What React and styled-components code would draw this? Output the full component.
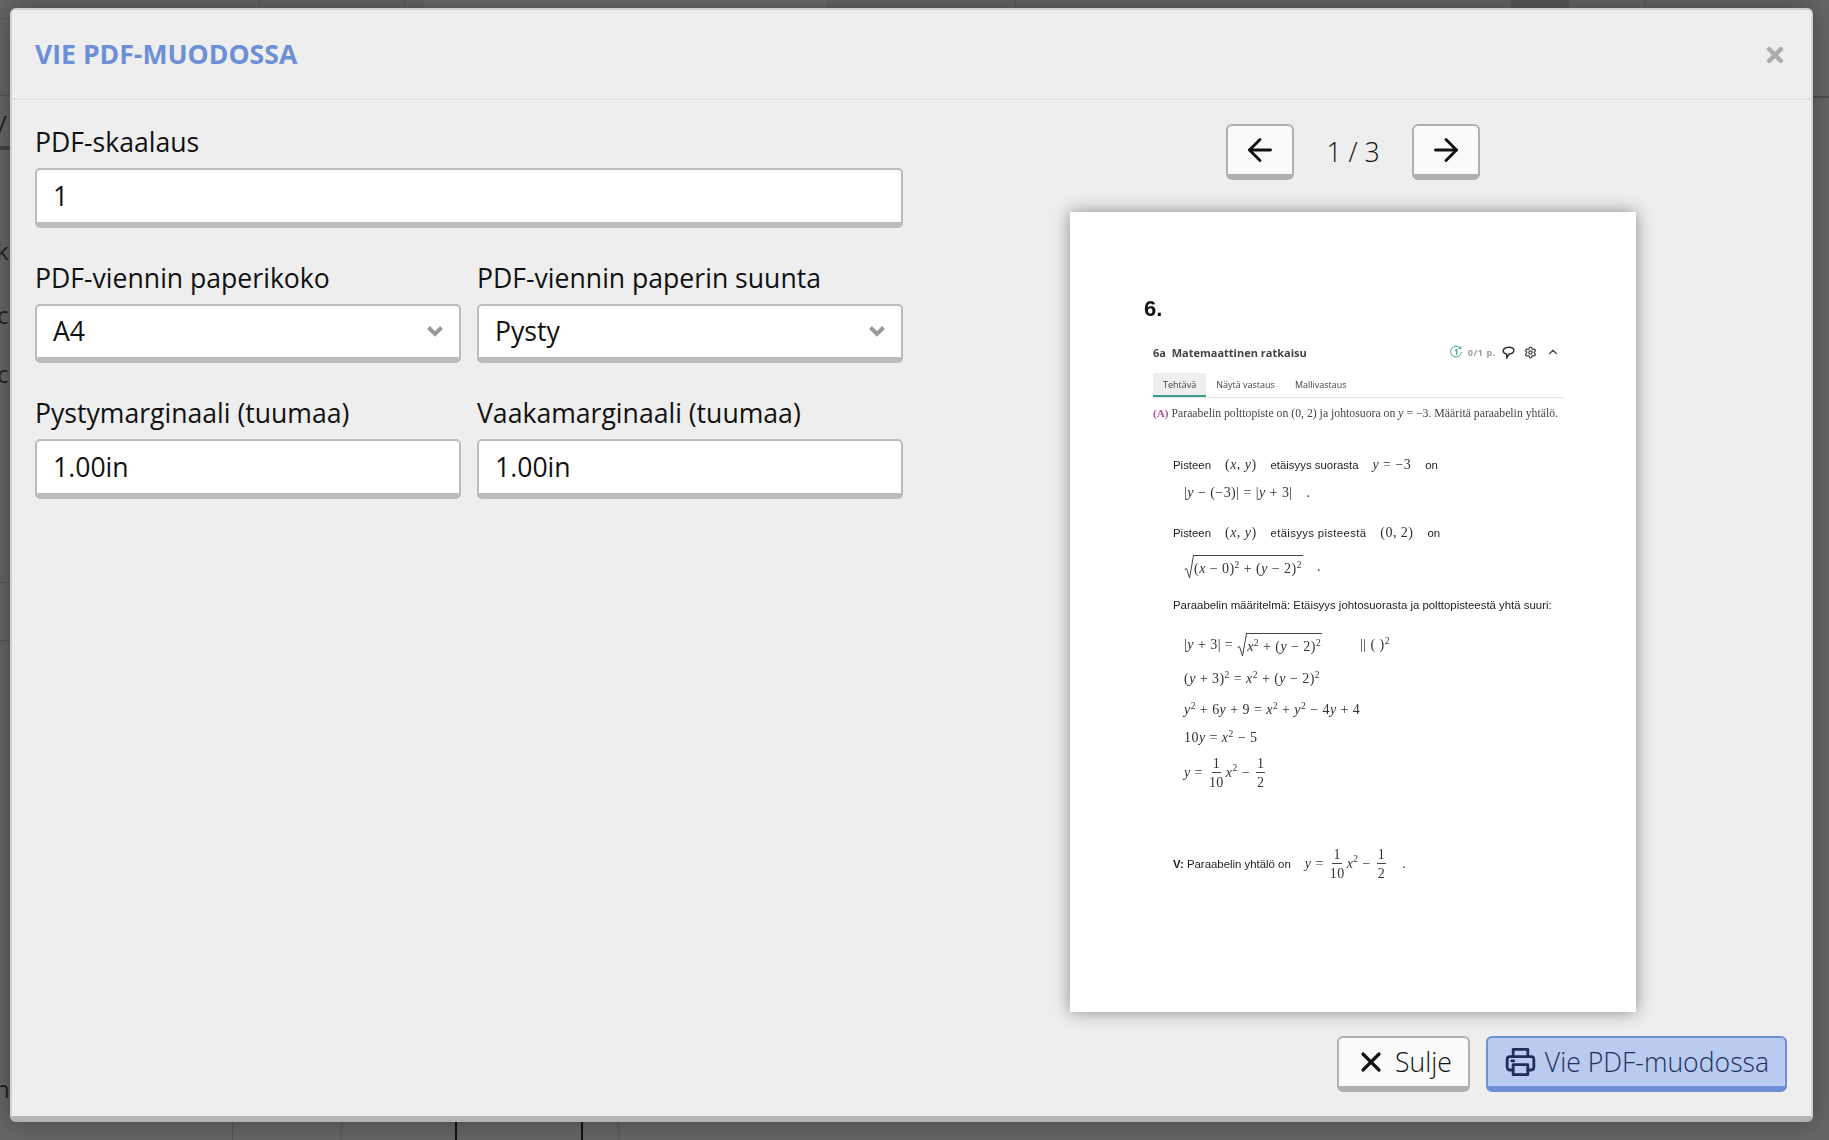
import React from "react";
import styled, { createGlobalStyle } from "styled-components";
import { ArrowLeft, ArrowRight, X, ChevronUp, Settings } from "lucide-react";
import { FaTimes } from "react-icons/fa";

const Global = createGlobalStyle`
  html, body { margin: 0; padding: 0; height: 100%; background: #666; }
  body { font-family: "Open Sans", "Noto Sans", sans-serif; color: #111; overflow: hidden; }
  * { box-sizing: border-box; }
`;

const Stage = styled.div`
  position: relative;
  width: 100%;
  height: 100vh;
  padding: 8px 16px 18px 10px;
  background: #666;
  overflow: hidden;
`;
const Ghost = styled.div`
  position: absolute;
  left: ${(p) => p.$x}px;
  top: ${(p) => p.$y}px;
  width: ${(p) => p.$w}px;
  height: ${(p) => p.$h}px;
  background: ${(p) => p.$c};
`;
const GhostGlyph = styled.span`
  position: absolute;
  left: ${(p) => p.$x}px;
  top: ${(p) => p.$y}px;
  font: 24px/24px "Open Sans", sans-serif;
  color: #222;
`;

const Modal = styled.div`
  position: relative;
  height: 100%;
  display: flex;
  flex-direction: column;
  background: #eee;
  border: 2px solid #d2d2d2;
  border-bottom: 6px solid #b3b3b3;
  border-radius: 6px;
  box-shadow: 0 0 26px rgba(0, 0, 0, 0.35);
`;
const Header = styled.header`
  height: 90px;
  flex: none;
  display: flex;
  align-items: center;
  justify-content: space-between;
  padding: 0 24px 0 23px;
  border-bottom: 2px solid #e4e4e4;
`;
const Title = styled.h2`
  margin: 0;
  font-size: 26.6px;
  font-weight: 700;
  color: #6c8fd6;
  line-height: 36px;
`;
const CloseIcon = styled(FaTimes)`
  width: 24px;
  height: 24px;
  margin-top: 2px;
  color: #acacac;
`;
const Body = styled.main`
  flex: 1;
  display: grid;
  grid-template-columns: 868px 868px;
  column-gap: 16px;
  padding: 24px 24px 0 23px;
  min-height: 0;
`;
const Form = styled.div`
  display: flex;
  flex-direction: column;
  gap: 32px;
`;
const FieldRow = styled.div`
  display: grid;
  grid-template-columns: 1fr 1fr;
  column-gap: 16px;
`;
const Field = styled.div`
  display: flex;
  flex-direction: column;
`;
const Label = styled.label`
  height: 36px;
  margin-bottom: 8px;
  font-size: 26.6px;
  line-height: 37px;
  color: #111;
`;
const Input = styled.div`
  position: relative;
  height: 59.5px;
  display: flex;
  align-items: center;
  padding: 0 16px;
  background: #fff;
  border: 2px solid #bcbcbc;
  border-bottom-width: 6px;
  border-radius: 5px;
  font-size: 26.6px;
  color: #111;
`;
const SelectArrow = styled.svg`
  position: absolute;
  right: 15px;
  top: 18px;
  width: 18px;
  height: 14px;
  fill: none;
  stroke: #9a9a9a;
  stroke-width: 4;
`;
const Preview = styled.div`
  display: flex;
  flex-direction: column;
  align-items: center;
`;
const Pager = styled.div`
  display: flex;
  align-items: center;
  height: 56px;
  margin-bottom: 32px;
`;
const IconButton = styled.button`
  width: 68px;
  height: 56px;
  padding: 0;
  display: flex;
  align-items: center;
  justify-content: center;
  background: #fafafa;
  border: 2px solid #b0b0b0;
  border-bottom-width: 6px;
  border-radius: 6px;
  color: #111;
`;
const PageCount = styled.span`
  width: 118px;
  text-align: center;
  font-size: 26.6px;
  font-weight: 300;
  color: #111;
`;
const Sheet = styled.div`
  width: 566px;
  height: 800px;
  flex: none;
  background: #fff;
  box-shadow: 0 0 16px rgba(0, 0, 0, 0.42);
  overflow: hidden;
`;
const SheetContent = styled.div`
  display: flex;
  flex-direction: column;
  padding-top: 85px;
  color: #222;
  font-family: "Liberation Sans", Arial, sans-serif;
  font-size: 11.4px;
  filter: blur(0.3px);
`;
const Row = styled.div`
  flex: none;
  height: 24px;
  margin-top: ${(p) => p.$mt || 0}px;
  margin-left: ${(p) => p.$x}px;
  display: flex;
  align-items: center;
  gap: ${(p) => p.$gap || 14}px;
  white-space: nowrap;
  color: #1c1c1c;
`;
const LooseText = styled.span`
  letter-spacing: 0.33px;
`;
const Num = styled.div`
  height: 24px;
  margin-left: 74px;
  font: 700 22px/24px "Liberation Sans", Arial, sans-serif;
  color: #111;
`;
const ExerciseBar = styled.div`
  margin: 19px 0 0 83px;
  width: 410px;
  height: 24px;
  padding-right: 3px;
  display: flex;
  align-items: center;
  font: 700 11px "Open Sans", sans-serif;
  color: #444;
`;
const ExerciseName = styled.span`
  flex: 1;
  white-space: pre;
`;
const Score = styled.span`
  margin: 0 6px 0 5px;
  color: #999;
  font-size: 9px;
  letter-spacing: 0.6px;
`;
const SmallIcons = styled.span`
  display: flex;
  align-items: center;
  gap: 9px;
  color: #444;
`;
const Tabs = styled.div`
  margin: 9px 0 0 83px;
  width: 410px;
  height: 25px;
  display: flex;
  border-bottom: 1px solid #e2e2e2;
  font: 9px "Open Sans", sans-serif;
  color: #444;
`;
const Tab = styled.span`
  height: 24px;
  min-width: ${(p) => (p.$active ? "52px" : "0")};
  padding: 0 10px;
  display: flex;
  align-items: center;
  justify-content: center;
  background: ${(p) => (p.$active ? "#eee" : "transparent")};
  border-bottom: 2px solid ${(p) => (p.$active ? "#3a9c8c" : "transparent")};
`;
const Lead = styled.div`
  margin: 3px 0 0 83px;
  height: 24px;
  display: flex;
  align-items: center;
  white-space: pre;
  font: 11.75px "Liberation Serif", serif;
  color: #444;
`;
const Tag = styled.b`
  font-size: 11.2px;
  color: #b0509a;
`;
const Math = styled.span`
  display: inline-block;
  font-family: "Liberation Serif", "Times New Roman", serif;
  font-size: 14px;
  letter-spacing: 0.45px;
  line-height: 24px;
  color: #333;
  white-space: pre;
`;
const I = styled.i``;
const Sup = styled.sup`
  font-size: 0.68em;
  line-height: 0;
  vertical-align: 0.55em;
`;
const Line = styled.span`
  display: inline-block;
`;
const Root = styled.span`
  display: inline-flex;
  align-items: flex-start;
  height: 24px;
  vertical-align: middle;
`;
const Radicand = styled.span`
  display: inline-block;
  height: 24px;
  margin-left: -1px;
  padding: 0 1px;
  line-height: 25px;
  border-top: 1px solid #444;
`;
const Frac = styled.span`
  display: inline-flex;
  flex-direction: column;
  align-items: center;
  vertical-align: middle;
  margin: 0 2px;
  line-height: 16px;
`;
const Numer = styled.span`
  padding: 0 1px;
  margin-bottom: 2px;
  border-bottom: 1px solid #444;
`;
const Footer = styled.footer`
  flex: none;
  height: 104px;
  padding: 24px 24px 24px 0;
  display: flex;
  justify-content: flex-end;
  gap: 16px;
`;
const Button = styled.button`
  height: 56px;
  padding: 0 16px;
  display: flex;
  align-items: center;
  gap: 8px;
  background: ${(p) => (p.$primary ? "#b9cbee" : "#fafafa")};
  border: 2px solid ${(p) => (p.$primary ? "#6c8fd6" : "#b0b0b0")};
  border-bottom-width: 6px;
  border-radius: 6px;
  font: 300 26.6px "Open Sans", sans-serif;
  color: ${(p) => (p.$primary ? "#1f2f5c" : "#111")};
`;

const Radical = () => (
  <svg width="10" height="24" viewBox="0 0 10 24" fill="none" stroke="#444" strokeWidth="1">
    <path d="M0.5 14.5 L2.5 13.5 L5.5 23 L9.5 0.5" />
  </svg>
);

const Printer = () => (
  <svg width="33" height="32" viewBox="0 0 24 24" fill="none" stroke="#1f2f5c" strokeWidth="2.1" strokeLinejoin="round" strokeLinecap="round">
    <path d="M6.5 8V2.5h11V8" />
    <path d="M6.5 18H4a2 2 0 0 1-2-2v-6a2 2 0 0 1 2-2h16a2 2 0 0 1 2 2v6a2 2 0 0 1-2 2h-2.500" />
    <rect x="6.5" y="14" width="11" height="7.5" />
    <path d="M5.5 11.2h1.400" />
  </svg>
);

const Retry = () => (
  <svg width="14" height="14" viewBox="0 0 14 14" fill="none" stroke="#3aa896" strokeWidth="1">
    <path d="M11.5 3.500A5.4 5.4 0 1 0 12.4 7" />
    <path d="M9.400 3.400h2.400V1" />
    <text x="5" y="10" fontSize="8" fill="#3aa896" stroke="none" fontFamily="Open Sans">1</text>
  </svg>
);

const Comment = () => (
  <svg width="13" height="13" viewBox="0 0 13 13" fill="none" stroke="#333" strokeWidth="1.5">
    <path d="M6.500 1.200c3-.4 5.500 1.200 5.300 3.400-.2 2-2.400 3.400-4.600 3.400L4.800 11.800l-.2-3.800C2.400 7.600 1 6.200 1.200 4.600 1.400 2.800 3.600 1.500 6.500 1.200z" />
  </svg>
);

const Select = ({ value }) => (
  <Input>
    {value}
    <SelectArrow viewBox="0 0 18 14">
      <path d="M2.500 3.500 9 10l6.500-6.500" />
    </SelectArrow>
  </Input>
);

const Fraction = ({ a, b }) => (
  <Frac>
    <Numer>{a}</Numer>
    <span>{b}</span>
  </Frac>
);

const Answer = () => (
  <>
    <I>y</I> = <Fraction a="1" b="10" />
    <I>x</I>
    <Sup>2</Sup> − <Fraction a="1" b="2" />
  </>
);

export default function App() {
  return (
    <Stage>
      <Global />
      <Ghost $x={0} $y={18} $w={10} $h={1} $c="#5c5c5c" />
      <Ghost $x={0} $y={95} $w={10} $h={1} $c="#555" />
      <Ghost $x={0} $y={146} $w={10} $h={4} $c="#444" />
      <Ghost $x={0} $y={582} $w={10} $h={1} $c="#555" />
      <Ghost $x={0} $y={640} $w={10} $h={1} $c="#555" />
      <GhostGlyph $x={-4} $y={239}>k</GhostGlyph>
      <GhostGlyph $x={-3} $y={303}>c</GhostGlyph>
      <GhostGlyph $x={-3} $y={362}>c</GhostGlyph>
      <GhostGlyph $x={-5} $y={1077}>n</GhostGlyph>
      <GhostGlyph $x={-2} $y={112}>/</GhostGlyph>
      <Ghost $x={259} $y={0} $w={1} $h={8} $c="#595959" />
      <Ghost $x={404} $y={0} $w={1} $h={8} $c="#595959" />
      <Ghost $x={424} $y={0} $w={402} $h={8} $c="#6c6c6c" />
      <Ghost $x={1015} $y={0} $w={1} $h={8} $c="#595959" />
      <Ghost $x={1511} $y={0} $w={58} $h={8} $c="#585858" />
      <Ghost $x={1645} $y={0} $w={1} $h={8} $c="#5a5a5a" />
      <Ghost $x={232} $y={1122} $w={1} $h={18} $c="#555" />
      <Ghost $x={341} $y={1122} $w={1} $h={18} $c="#5a5a5a" />
      <Ghost $x={455} $y={1122} $w={2} $h={18} $c="#111" />
      <Ghost $x={581} $y={1122} $w={2} $h={18} $c="#111" />
      <Ghost $x={618} $y={1122} $w={1} $h={18} $c="#5a5a5a" />
      <Ghost $x={1813} $y={96} $w={16} $h={2} $c="#505050" />
      <Modal>
        <Header>
          <Title>VIE PDF-MUODOSSA</Title>
          <CloseIcon />
        </Header>
        <Body>
          <Form>
            <Field>
              <Label>PDF-skaalaus</Label>
              <Input>1</Input>
            </Field>
            <FieldRow>
              <Field>
                <Label>PDF-viennin paperikoko</Label>
                <Select value="A4" />
              </Field>
              <Field>
                <Label>PDF-viennin paperin suunta</Label>
                <Select value="Pysty" />
              </Field>
            </FieldRow>
            <FieldRow>
              <Field>
                <Label>Pystymarginaali (tuumaa)</Label>
                <Input>1.00in</Input>
              </Field>
              <Field>
                <Label>Vaakamarginaali (tuumaa)</Label>
                <Input>1.00in</Input>
              </Field>
            </FieldRow>
          </Form>
          <Preview>
            <Pager>
              <IconButton aria-label="Edellinen">
                <ArrowLeft size={36} strokeWidth={1.9} />
              </IconButton>
              <PageCount>1 / 3</PageCount>
              <IconButton aria-label="Seuraava">
                <ArrowRight size={36} strokeWidth={1.9} />
              </IconButton>
            </Pager>
            <Sheet>
              <SheetContent>
                <Num>6.</Num>
                <ExerciseBar>
                  <ExerciseName>6a  Matemaattinen ratkaisu</ExerciseName>
                  <Retry />
                  <Score>0/1 p.</Score>
                  <SmallIcons>
                    <Comment />
                    <Settings size={13} strokeWidth={2.4} />
                    <ChevronUp size={14} strokeWidth={2} />
                  </SmallIcons>
                </ExerciseBar>
                <Tabs>
                  <Tab $active>Tehtävä</Tab>
                  <Tab>Näytä vastaus</Tab>
                  <Tab>Mallivastaus</Tab>
                </Tabs>
                <Lead>
                  <Tag>(A)</Tag> Paraabelin polttopiste on (0, 2) ja johtosuora on <I>y</I> = −3. Määritä paraabelin yhtälö.
                </Lead>
                <Row $x={103} $mt={28}>
                  <span>Pisteen</span>
                  <Math>(<I>x</I>, <I>y</I>)</Math>
                  <span>etäisyys suorasta</span>
                  <Math><I>y</I> = −3</Math>
                  <span>on</span>
                </Row>
                <Row $x={114} $mt={4}>
                  <Math>|<I>y</I> − (−3)| = |<I>y</I> + 3|</Math>
                  <Math>.</Math>
                </Row>
                <Row $x={103} $mt={16}>
                  <span>Pisteen</span>
                  <Math>(<I>x</I>, <I>y</I>)</Math>
                  <LooseText>etäisyys pisteestä</LooseText>
                  <Math>(0, 2)</Math>
                  <span>on</span>
                </Row>
                <Row $x={114} $mt={10}>
                  <Math>
                    <Root>
                      <Radical />
                      <Radicand>(<I>x</I> − 0)<Sup>2</Sup> + (<I>y</I> − 2)<Sup>2</Sup></Radicand>
                    </Root>
                  </Math>
                  <Math>.</Math>
                </Row>
                <Row $x={103} $mt={14}>
                  <span>Paraabelin määritelmä: Etäisyys johtosuorasta ja polttopisteestä yhtä suuri:</span>
                </Row>
                <Row $x={114} $mt={16} $gap={38}>
                  <Math>
                    |<I>y</I> + 3| =&nbsp;
                    <Root>
                      <Radical />
                      <Radicand><I>x</I><Sup>2</Sup> + (<I>y</I> − 2)<Sup>2</Sup></Radicand>
                    </Root>
                  </Math>
                  <Math>|| ( )<Sup>2</Sup></Math>
                </Row>
                <Row $x={114} $mt={10}>
                  <Math>(<I>y</I> + 3)<Sup>2</Sup> = <I>x</I><Sup>2</Sup> + (<I>y</I> − 2)<Sup>2</Sup></Math>
                </Row>
                <Row $x={114} $mt={7}>
                  <Math><I>y</I><Sup>2</Sup> + 6<I>y</I> + 9 = <I>x</I><Sup>2</Sup> + <I>y</I><Sup>2</Sup> − 4<I>y</I> + 4</Math>
                </Row>
                <Row $x={114} $mt={4}>
                  <Math>10<I>y</I> = <I>x</I><Sup>2</Sup> − 5</Math>
                </Row>
                <Row $x={114} $mt={11}>
                  <Math><Answer /></Math>
                </Row>
                <Row $x={103} $mt={67}>
                  <Line><b>V:</b> Paraabelin yhtälö on</Line>
                  <Math><Answer /></Math>
                  <Math>.</Math>
                </Row>
              </SheetContent>
            </Sheet>
          </Preview>
        </Body>
        <Footer>
          <Button>
            <X size={32} strokeWidth={2.4} />
            Sulje
          </Button>
          <Button $primary>
            <Printer />
            Vie PDF-muodossa
          </Button>
        </Footer>
      </Modal>
    </Stage>
  );
}
